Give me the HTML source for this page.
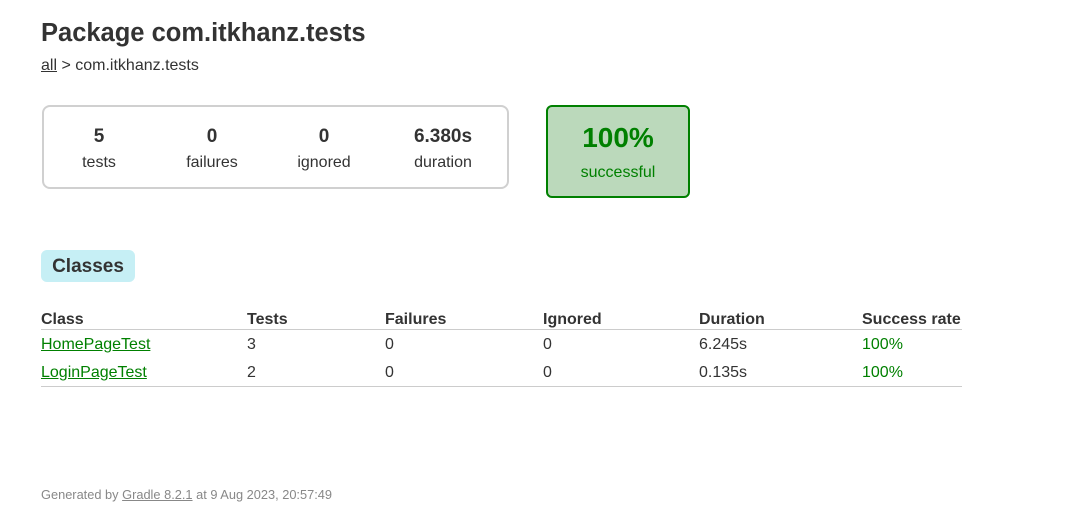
<!DOCTYPE html>
<html><head><meta charset="utf-8"><style>
body{margin:0;width:1073px;height:518px;background:#fff;font-family:"Liberation Sans",Arial,sans-serif;color:#333;position:relative;overflow:hidden}
.a{position:absolute;white-space:nowrap}
h1{position:absolute;left:41px;top:19px;margin:0;font-size:25.5px;font-weight:bold}
.bc{left:41px;top:57px;font-size:16px}
.bc u{color:#333}
.sum{position:absolute;left:42px;top:105px;width:463px;height:80px;border:2px solid #d0d0d0;border-radius:8px}
.c{position:absolute;text-align:center;width:100px}
.n{font-size:19px;font-weight:bold;top:126px}
.l{font-size:16px;top:154px}
.succ{position:absolute;left:546px;top:105px;width:140px;height:89px;border:2px solid #008000;border-radius:6px;background:#bbd9bb;color:#008000;text-align:center}
.tab{position:absolute;left:41px;top:250px;width:94px;height:32px;background:#c6eff5;border-radius:6px;font-weight:bold;font-size:19px;line-height:34px;text-align:center}
.th{font-weight:bold;font-size:16px;top:311px}
.td{font-size:16px}
.g{color:#008000}
.line{position:absolute;left:41px;width:921px;height:1px;background:#ccc}
.ft{left:41px;top:487px;font-size:12.8px;color:#888}
</style></head><body>
<h1>Package com.itkhanz.tests</h1>
<div class="a bc"><u>all</u> &gt; com.itkhanz.tests</div>
<div class="sum"></div>
<div class="c n" style="left:49px">5</div><div class="c l" style="left:49px">tests</div>
<div class="c n" style="left:162px">0</div><div class="c l" style="left:162px">failures</div>
<div class="c n" style="left:274px">0</div><div class="c l" style="left:274px">ignored</div>
<div class="c n" style="left:393px">6.380s</div><div class="c l" style="left:393px">duration</div>
<div class="succ"><div style="font-size:28px;font-weight:bold;margin-top:15px">100%</div><div style="font-size:16px;margin-top:10px">successful</div></div>
<div class="tab">Classes</div>
<div class="a th" style="left:41px">Class</div>
<div class="a th" style="left:247px">Tests</div>
<div class="a th" style="left:385px">Failures</div>
<div class="a th" style="left:543px">Ignored</div>
<div class="a th" style="left:699px">Duration</div>
<div class="a th" style="left:862px">Success rate</div>
<div class="line" style="top:329px"></div>
<div class="a td g" style="left:41px;top:336px"><u>HomePageTest</u></div>
<div class="a td" style="left:247px;top:336px">3</div>
<div class="a td" style="left:385px;top:336px">0</div>
<div class="a td" style="left:543px;top:336px">0</div>
<div class="a td" style="left:699px;top:336px">6.245s</div>
<div class="a td g" style="left:862px;top:336px">100%</div>
<div class="a td g" style="left:41px;top:364px"><u>LoginPageTest</u></div>
<div class="a td" style="left:247px;top:364px">2</div>
<div class="a td" style="left:385px;top:364px">0</div>
<div class="a td" style="left:543px;top:364px">0</div>
<div class="a td" style="left:699px;top:364px">0.135s</div>
<div class="a td g" style="left:862px;top:364px">100%</div>
<div class="line" style="top:386px"></div>
<div class="a ft">Generated by <u>Gradle 8.2.1</u> at 9 Aug 2023, 20:57:49</div>
</body></html>
